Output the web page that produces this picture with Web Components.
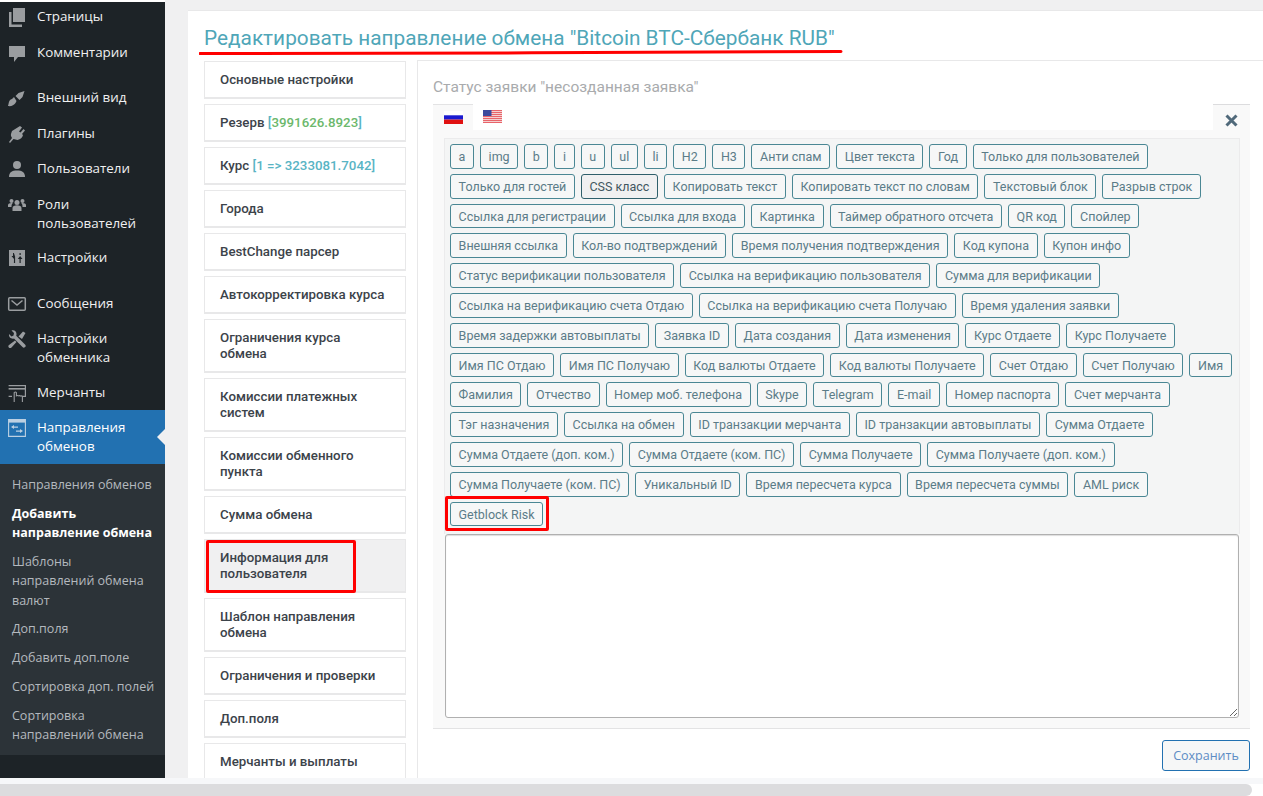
<!DOCTYPE html>
<html lang="ru">
<head>
<meta charset="utf-8">
<title>Редактировать направление обмена</title>
<style>
html, body { margin:0; padding:0; height:796px; overflow:hidden; background:#fff; }
body { font-family:"Roboto","Liberation Sans",sans-serif; }
</style>
</head>
<body>
<admin-page></admin-page>
<script>
const ICONS = {
    page: '<path d="M6 1h12v14H6z" /><path d="M2 5h2.500v12.500H15V20H2z"/>',
    comment: '<path d="M2 3h16v11h-7l-4 5v-5H2z"/>',
    brush: '<path d="M19 2l-1.500 1-6 2-3 3 4 4 3-3 2-6z"/><path d="M7 9l-2 2c-2 .5-3 2-3.500 5-.2 1-.5 1.500-.5 2 3 .5 6-.5 7.500-3 .5-.8.500-1.500 1-2z"/>',
    plugin: '<path d="M13 2l2 1.500-3 4 1.500 1 3-3.500 1.500 1.500-3 3.500 1 1c-.5 2.500-2.500 4.500-5.500 5L6.500 15 3 19l-1-1 3-4-1-2c-.5-2 .5-3 1-5z"/>',
    user: '<circle cx="10" cy="6" r="4"/><path d="M2 18c0-5 3-6.500 8-6.500s8 1.500 8 6.500z"/>',
    group: '<circle cx="10" cy="7.500" r="2.500"/><circle cx="4.500" cy="6" r="2"/><circle cx="15.500" cy="6" r="2"/><path d="M5.500 16v-3c0-2 2-2.800 4.500-2.800s4.500.8 4.500 2.800v3z"/><path d="M1 12v-2c0-1.200 1.500-2 3.500-2 .5 0 1 .1 1.300.3-1 .6-1.300 1.700-1.300 3.700zM19 12v-2c0-1.200-1.500-2-3.500-2-.5 0-1 .1-1.300.3 1 .6 1.300 1.700 1.300 3.700z"/>',
    sliders: '<path fill-rule="evenodd" d="M2 2h16v16H2zM6 5v3H4.500L7 11l-.1 4h1.200V8.500L6.900 5zM12.500 15h1.200v-4H15.500l-2.400-3-2.300 3h1.700zM12.500 5v2h1.200V5z"/>',
    mail: '<path fill="none" stroke="currentColor" stroke-width="1.500" d="M2.700 3.700h14.600q1 0 1 1v10.600q0 1-1 1H2.700q-1 0-1-1V4.700q0-1 1-1z"/><path fill="none" stroke="currentColor" stroke-width="1.500" d="M4.500 6.500L10 11l5.500-4.500"/>',
    tools: '<path d="M2 5l2.500 2.500 2-1L7 4 4.500 1.500C7 .5 9.500 2 9.500 5c0 .8-.1 1.300-.3 1.800L18 15.500c1 1 1 2-.2 2.800-.8.700-1.600.5-2.300-.2L7 9.500C4.500 10.300 1.500 8.500 2 5z"/><path d="M11.500 7.500L16 2.500l2.500 1.500-3.500 6zM8 11.500L9.500 13l-5 5.500c-.8.7-2 .7-2.700-.1-.7-.8-.6-1.700.2-2.400z"/>',
    merchant: '<path fill="none" stroke="currentColor" stroke-width="1.200" d="M1.600 2.600h16.800v10.800H15M5 13.400H1.600z"/><path d="M1.600 5h16.800v1.600H1.600z"/><path fill="none" stroke="currentColor" stroke-width="1.100" d="M7.200 19V9.600q1.200-1.200 2.200 0v3.200q1.100-.7 2 .1 1-.7 2 .1 1.200-.5 2 .4V19"/>',
    exchange: '<path fill="none" stroke="currentColor" stroke-width="1.100" d="M1.600 1.600h16.800v16.800H1.600z"/><path d="M1.600 1.600h16.800v3H1.600z"/><path d="M4 9l3-2v1.400h4v1.300H7V11zM16 13l-3-2v1.400H9v1.300h4V15z"/>'
}

class NavItem extends HTMLElement {
    constructor() {
        super()
        const shadow = this.attachShadow({ mode: 'open' })
        const name = this.getAttribute('icon')
        shadow.innerHTML = `
        <style>
        :host {
            display:flex;
            padding:7.750px 8px 7.750px 0;
            color:#f0f0f1;
            font-size:13.400px;
            line-height:19px;
        }
        :host([gap]) { margin-top:10px; }
        :host([active]) {
            background:#2271b1;
            color:#fff;
            position:relative;
        }
        :host([active])::after {
            content:'';
            position:absolute;
            right:0;
            top:19px;
            border:8px solid transparent;
            border-right-color:#f0f0f1;
            border-left-width:0;
        }
        svg {
            flex:none;
            width:20px;
            height:20px;
            margin:0 7px 0 7px;
            fill:currentColor;
            color:#9a9da0;
        }
        :host([active]) svg { color:#bcd0e2; }
        .label { margin-left:3px; }
        </style>
        <svg viewBox="0 0 20 20">${ICONS[name]}</svg>
        <span class="label"><slot></slot></span>
        `
    }
}
customElements.define('nav-item', NavItem)

class SubItem extends HTMLElement {
    constructor() {
        super()
        this.attachShadow({ mode: 'open' }).innerHTML = `
        <style>
        :host {
            display:block;
            padding:4.800px 8px 4.800px 12px;
            color:#b4b9be;
            font-size:12.500px;
            line-height:19.200px;
        }
        :host([current]) { color:#fff; font-weight:700; }
        </style>
        <slot></slot>
        `
    }
}
customElements.define('sub-item', SubItem)

class AdminSidebar extends HTMLElement {
    constructor() {
        super()
        this.attachShadow({ mode: 'open' }).innerHTML = `
        <style>
        :host {
            display:block;
            width:165px;
            flex:none;
            height:776px;
            margin-top:2px;
            overflow:hidden;
            background:#1d2327;
            font-family:"Open Sans","Liberation Sans",sans-serif;
        }
        .top { margin-top:-2.750px; }
        .sub { background:#2c3338; padding:6.800px 0 6px; }
        </style>
        <div class="top">
        <nav-item icon="page">Страницы</nav-item>
        <nav-item icon="comment">Комментарии</nav-item>
        <nav-item icon="brush" gap>Внешний вид</nav-item>
        <nav-item icon="plugin">Плагины</nav-item>
        <nav-item icon="user">Пользователи</nav-item>
        <nav-item icon="group">Роли пользователей</nav-item>
        <nav-item icon="sliders">Настройки</nav-item>
        <nav-item icon="mail" gap>Сообщения</nav-item>
        <nav-item icon="tools">Настройки обменника</nav-item>
        <nav-item icon="merchant">Мерчанты</nav-item>
        <nav-item icon="exchange" active>Направления обменов</nav-item>
        </div>
        <div class="sub">
        <sub-item>Направления обменов</sub-item>
        <sub-item current>Добавить направление обмена</sub-item>
        <sub-item>Шаблоны направлений обмена валют</sub-item>
        <sub-item>Доп.поля</sub-item>
        <sub-item>Добавить доп.поле</sub-item>
        <sub-item>Сортировка доп. полей</sub-item>
        <sub-item>Сортировка направлений обмена</sub-item>
        </div>
        `
    }
}
customElements.define('admin-sidebar', AdminSidebar)

class MenuItem extends HTMLElement {
    constructor() {
        super()
        this.attachShadow({ mode: 'open' }).innerHTML = `
        <style>
        :host {
            display:block;
            position:relative;
            box-sizing:border-box;
            padding:10px 19px 9px 15px;
            background:#fff;
            border:1px solid #e8e8e9;
            border-bottom-width:2px;
            color:#3c434a;
            font-size:13.300px;
            font-weight:500;
            line-height:16px;
        }
        :host([active]) { background:#f0f0f1; }
        :host([marked])::after {
            content:'';
            position:absolute;
            left:1px;
            top:0;
            width:150px;
            height:53px;
            box-sizing:border-box;
            border:3.500px solid #f00;
            border-radius:2px;
        }
        ::slotted(b) { font-weight:500; color:#58b4c4; }
        </style>
        <slot></slot>
        `
    }
}
customElements.define('menu-item', MenuItem)

class TagButton extends HTMLElement {
    constructor() {
        super()
        this.attachShadow({ mode: 'open' }).innerHTML = `
        <style>
        :host {
            display:block;
            position:relative;
            box-sizing:border-box;
            height:24.800px;
            padding:0 7.600px;
            background:#f6f7f7;
            border:1px solid #4a8794;
            border-radius:3px;
            color:#5b7c88;
            font-size:12.500px;
            line-height:23px;
            white-space:nowrap;
        }
        :host([hover]) { background:#f0f0f1; border-color:#2f5f6b; color:#3f5660; }
        :host([marked])::after {
            content:'';
            position:absolute;
            left:-6px;
            top:-7px;
            right:-7px;
            bottom:-5.400px;
            border:3.500px solid #f00;
            border-radius:2px;
        }
        </style>
        <slot></slot>
        `
    }
}
customElements.define('tag-button', TagButton)

const TAGS = ['a','img','b','i','u','ul','li','H2','H3','Анти спам','Цвет текста','Год','Только для пользователей',
    'Только для гостей','CSS класс','Копировать текст','Копировать текст по словам','Текстовый блок','Разрыв строк',
    'Ссылка для регистрации','Ссылка для входа','Картинка','Таймер обратного отсчета','QR код','Спойлер',
    'Внешняя ссылка','Кол-во подтверждений','Время получения подтверждения','Код купона','Купон инфо',
    'Статус верификации пользователя','Ссылка на верификацию пользователя','Сумма для верификации',
    'Ссылка на верификацию счета Отдаю','Ссылка на верификацию счета Получаю','Время удаления заявки',
    'Время задержки автовыплаты','Заявка ID','Дата создания','Дата изменения','Курс Отдаете','Курс Получаете',
    'Имя ПС Отдаю','Имя ПС Получаю','Код валюты Отдаете','Код валюты Получаете','Счет Отдаю','Счет Получаю','Имя',
    'Фамилия','Отчество','Номер моб. телефона','Skype','Telegram','E-mail','Номер паспорта','Счет мерчанта',
    'Тэг назначения','Ссылка на обмен','ID транзакции мерчанта','ID транзакции автовыплаты','Сумма Отдаете',
    'Сумма Отдаете (доп. ком.)','Сумма Отдаете (ком. ПС)','Сумма Получаете','Сумма Получаете (доп. ком.)',
    'Сумма Получаете (ком. ПС)','Уникальный ID','Время пересчета курса','Время пересчета суммы','AML риск','Getblock Risk']

class FlagIcon extends HTMLElement {
    constructor() {
        super()
        const shadow = this.attachShadow({ mode: 'open' })
        const ru = '<rect width="19" height="4.300" fill="#fff"/><rect y="4.300" width="19" height="4.300" fill="#1a1ad0"/><rect y="8.600" width="19" height="4.400" fill="#e01010"/>'
        let us = '<rect width="19" height="13" fill="#f4d0d0"/>'
        for (let y = 0; y < 13; y += 2) us += `<rect y="${y}" width="19" height="1" fill="#e8646a"/>`
        us += '<rect width="8.500" height="6" fill="#3c4a9c"/>'
        shadow.innerHTML = `
        <style>
        :host { display:block; width:19px; height:13px; }
        svg { display:block; }
        </style>
        <svg width="19" height="13" viewBox="0 0 19 13">${this.getAttribute('code') === 'ru' ? ru : us}</svg>
        `
    }
}
customElements.define('flag-icon', FlagIcon)

class TextEditor extends HTMLElement {
    constructor() {
        super()
        const shadow = this.attachShadow({ mode: 'open' })
        const buttons = TAGS.map(t => {
            let attrs = ''
            if (t === 'CSS класс') attrs = ' hover'
            if (t === 'Getblock Risk') attrs = ' marked'
            return `<tag-button${attrs}>${t}</tag-button>`
        }).join('')
        shadow.innerHTML = `
        <style>
        :host { display:block; }
        .tabs { display:flex; height:26px; }
        .tab {
            box-sizing:border-box;
            width:40px;
            height:26px;
            border-top:1px solid #e3e3e4;
            padding:6px 0 0 11px;
            background:#f9f9f9;
        }
        .tab.plain { background:none; border-color:transparent; padding-left:10px; padding-top:5px; }
        .spacer { flex:1; }
        .close {
            box-sizing:border-box;
            width:37px;
            height:26px;
            border-top:1px solid #dcdcde;
            background:#f9f9f9;
            color:#50697a;
            text-align:center;
        }
        .close svg { display:block; margin:9px auto 0; }
        .body {
            background:#f9f9f9;
            padding:8px 10px 10px 11px;
            border-bottom:1px solid #e3e3e4;
        }
        .bar {
            display:flex;
            flex-wrap:wrap;
            gap:5px 6px;
            box-sizing:border-box;
            height:396px;
            padding:5px 6px 0 5px;
            background:#f4f5f5;
            border:1px solid #ebebec;
            border-bottom:none;
            align-content:flex-start;
        }
        textarea {
            display:block;
            box-sizing:border-box;
            width:794px;
            height:184px;
            margin:0 0 0 1px;
            background:#fff;
            border:1px solid #b0b0b0;
            border-radius:3px;
            box-shadow:inset 0 1px 1px #ddd;
        }
        </style>
        <div class="tabs">
            <div class="tab"><flag-icon code="ru"></flag-icon></div>
            <div class="tab plain"><flag-icon code="us"></flag-icon></div>
            <div class="spacer"></div>
            <div class="close"><svg width="13" height="13" viewBox="0 0 13 13"><path d="M1.500 1.500l10 10M11.500 1.500l-10 10" stroke="currentColor" stroke-width="3"/></svg></div>
        </div>
        <div class="body">
            <div class="bar">${buttons}</div>
            <textarea aria-label="Текст"></textarea>
        </div>
        `
    }
}
customElements.define('text-editor', TextEditor)

class ExchangeForm extends HTMLElement {
    constructor() {
        super()
        this.attachShadow({ mode: 'open' }).innerHTML = `
        <style>
        :host {
            display:block;
            position:relative;
            box-sizing:border-box;
            height:768px;
            margin-left:-1px;
            background:#fff;
            border-top:1px solid #e8e8e9;
            font-family:"Roboto","Liberation Sans",sans-serif;
        }
        .head { display:block; height:49px; padding-left:16px; box-sizing:border-box; position:relative; }
        h1 {
            margin:0;
            padding-top:12px;
            color:#4fa6b8;
            font-size:20.800px;
            font-weight:400;
            line-height:30px;
            white-space:nowrap;
        }
        .underline { position:absolute; left:11px; top:39px; }
        .cols { display:flex; align-items:flex-start; height:720px; }
        .menu {
            flex:none;
            width:202px;
            margin:1px 0 0 16px;
            display:flex;
            flex-direction:column;
            gap:5px;
        }
        .panel {
            flex:1;
            margin-left:11px;
            height:720px;
            box-sizing:border-box;
            border-left:1px solid #e8e8e9;
            border-top:1px solid #e8e8e9;
            padding:16px 13px 0 15px;
        }
        .status {
            color:#a9abad;
            font-size:15.500px;
            line-height:21px;
            margin-bottom:6px;
        }
        .actions { display:flex; justify-content:flex-end; padding-top:11px; }
        .save {
            box-sizing:border-box;
            width:88px;
            height:31px;
            background:#f6f7f7;
            border:1px solid #2271b1;
            border-radius:3px;
            color:#5d8cc4;
            font:12.500px/29px "Open Sans","Liberation Sans",sans-serif;
            text-align:center;
            padding:0;
        }
        </style>
        <div class="head">
            <h1>Редактировать направление обмена "Bitcoin BTC-Сбербанк RUB"</h1>
            <svg class="underline" width="645" height="6" viewBox="0 0 645 6"><path d="M1 3.500C200 3 440 3 642 1.500" fill="none" stroke="#f00" stroke-width="3" stroke-linecap="round"/></svg>
        </div>
        <div class="cols">
            <div class="menu">
                <menu-item>Основные настройки</menu-item>
                <menu-item>Резерв <b>[<span style="color:#6cb86c">3991626.8923</span>]</b></menu-item>
                <menu-item>Курс <b>[1 =&gt; 3233081.7042]</b></menu-item>
                <menu-item>Города</menu-item>
                <menu-item>BestChange парсер</menu-item>
                <menu-item>Автокорректировка курса</menu-item>
                <menu-item>Ограничения курса обмена</menu-item>
                <menu-item>Комиссии платежных систем</menu-item>
                <menu-item>Комиссии обменного пункта</menu-item>
                <menu-item>Сумма обмена</menu-item>
                <menu-item active marked>Информация для пользователя</menu-item>
                <menu-item>Шаблон направления обмена</menu-item>
                <menu-item>Ограничения и проверки</menu-item>
                <menu-item>Доп.поля</menu-item>
                <menu-item>Мерчанты и выплаты</menu-item>
            </div>
            <div class="panel">
                <div class="status">Статус заявки "несозданная заявка"</div>
                <text-editor></text-editor>
                <div class="actions"><button class="save">Сохранить</button></div>
            </div>
        </div>
        `
    }
}
customElements.define('exchange-form', ExchangeForm)

class AdminPage extends HTMLElement {
    constructor() {
        super()
        this.attachShadow({ mode: 'open' }).innerHTML = `
        <style>
        :host { display:block; height:796px; overflow:hidden; }
        .frame { display:flex; height:778px; overflow:hidden; }
        .content {
            flex:1;
            min-width:0;
            background:#f0f0f1;
            padding:10px 0 0 24px;
            overflow:hidden;
        }
        .strip { height:6px; background:#f6f7f9; }
        .scroll { height:12px; width:1252px; background:#dcdcde; border-radius:0 6px 6px 0; }
        </style>
        <div class="frame">
            <admin-sidebar></admin-sidebar>
            <div class="content"><exchange-form></exchange-form></div>
        </div>
        <div class="strip"></div>
        <div class="scroll"></div>
        `
    }
}
customElements.define('admin-page', AdminPage)
</script>
</body>
</html>
